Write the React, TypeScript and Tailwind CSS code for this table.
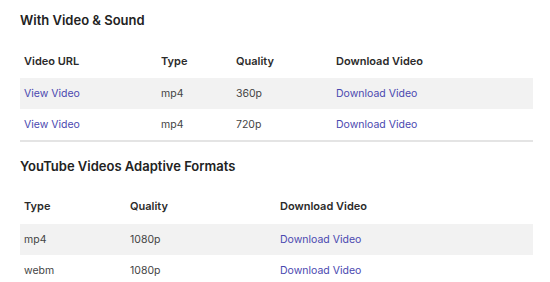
import React from 'react';

const link = 'text-[#4a48b0]';

interface Row {
  cells: { text: string; link?: boolean }[];
}

const Table: React.FC<{ cols: string; head: string; headers: string[]; rows: Row[] }> = ({ cols, head, headers, rows }) => (
  <div className="ml-5 mr-[17px] border-b-2 border-[#e4e4e4]">
    <div className={`grid ${cols} ${head} text-[11px] leading-[18px] font-semibold text-[#2b2b2b]`}>
      {headers.map(h => (
        <div key={h} className="px-1">{h}</div>
      ))}
    </div>
    {rows.map((r, i) => (
      <div
        key={i}
        className={`grid ${cols} h-[31px] items-center text-[10.5px] ${i % 2 === 0 ? 'bg-[#f2f2f2]' : 'bg-white'}`}
      >
        {r.cells.map((c, j) => (
          <div key={j} className={`px-1 ${c.link ? link : 'text-[#444]'}`}>{c.text}</div>
        ))}
      </div>
    ))}
  </div>
);

export default function App() {
  return (
    <div className="w-[550px] h-[282px] overflow-hidden bg-white font-['Inter',sans-serif]">
      <h2 className="px-5 pt-[10px] h-[40px] text-[13px] leading-[20px] font-semibold text-[#222]">With Video &amp; Sound</h2>
      <Table
        cols="grid-cols-[137px_75px_100px_1fr]"
        head="h-[38px] pt-[12px]"
        headers={['Video URL', 'Type', 'Quality', 'Download Video']}
        rows={[
          { cells: [{ text: 'View Video', link: true }, { text: 'mp4' }, { text: '360p' }, { text: 'Download Video', link: true }] },
          { cells: [{ text: 'View Video', link: true }, { text: 'mp4' }, { text: '720p' }, { text: 'Download Video', link: true }] },
        ]}
      />
      <h2 className="px-5 pt-[14px] h-[40px] text-[13px] leading-[20px] font-semibold text-[#222]">YouTube Videos Adaptive Formats</h2>
      <Table
        cols="grid-cols-[106px_150px_1fr]"
        head="h-[42px] pt-[15px]"
        headers={['Type', 'Quality', 'Download Video']}
        rows={[
          { cells: [{ text: 'mp4' }, { text: '1080p' }, { text: 'Download Video', link: true }] },
          { cells: [{ text: 'webm' }, { text: '1080p' }, { text: 'Download Video', link: true }] },
        ]}
      />
    </div>
  );
}
